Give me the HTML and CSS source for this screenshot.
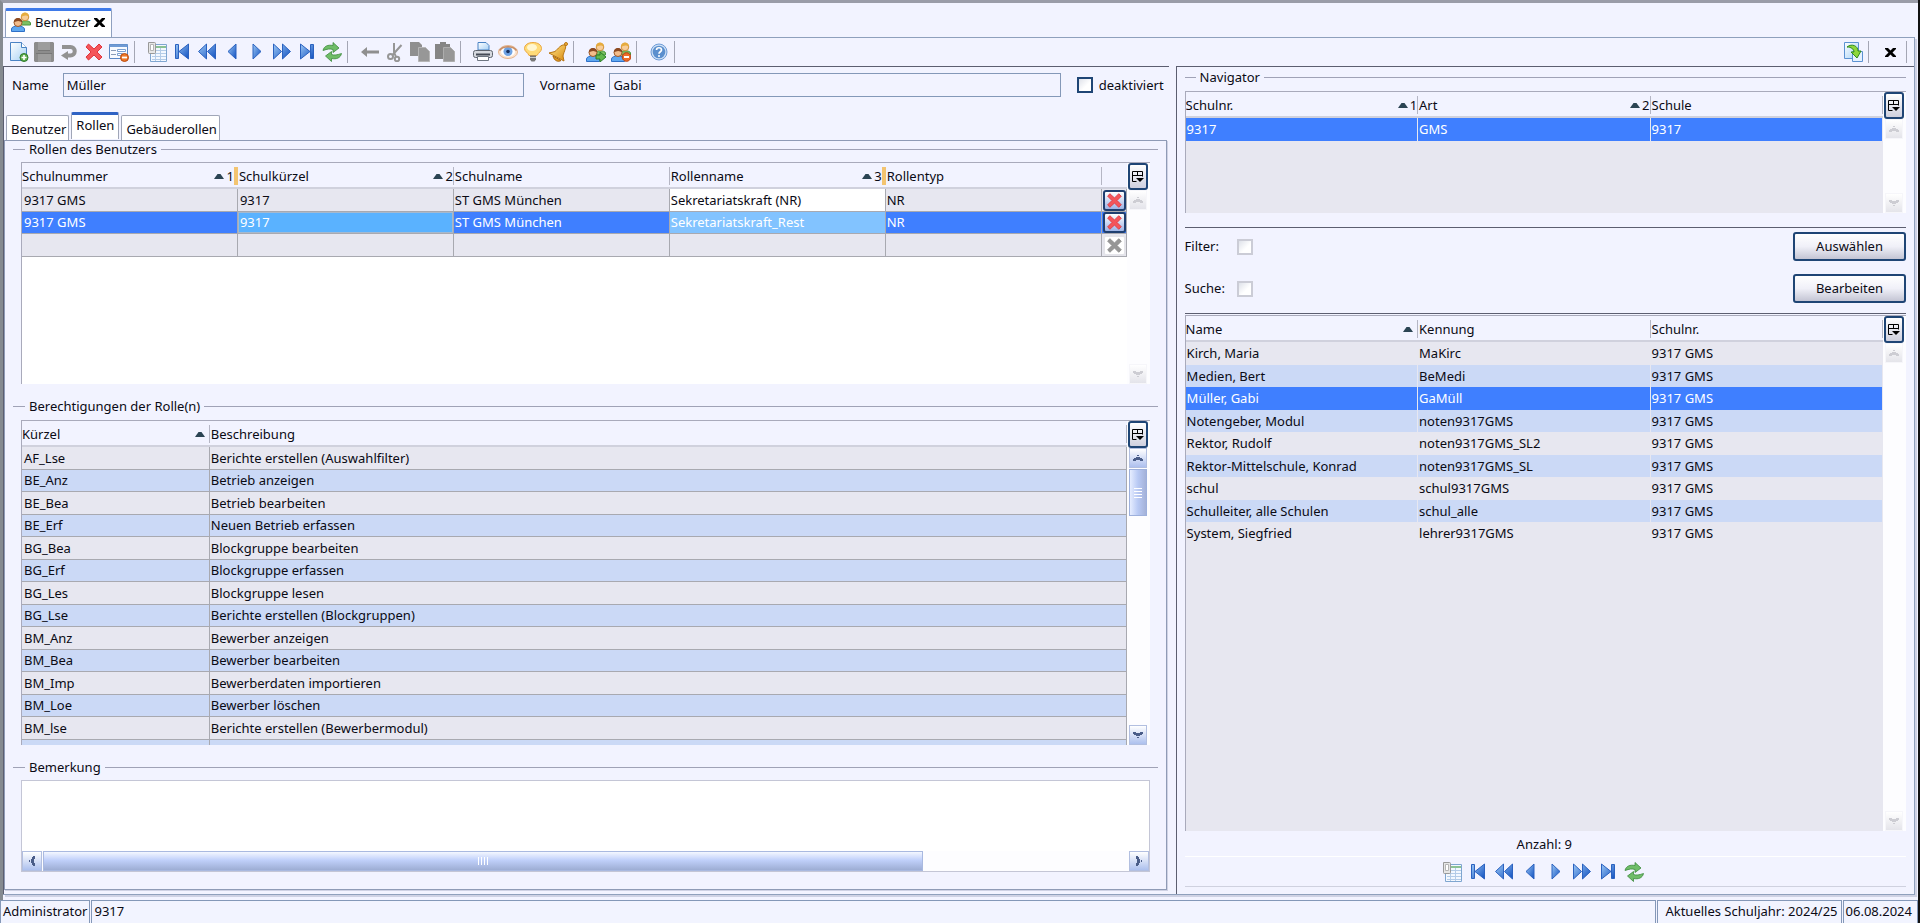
FILE: index.html
```html
<!DOCTYPE html>
<html lang="de">
<head>
  <meta charset="UTF-8">
  <meta name="viewport" content="width=device-width, initial-scale=1.0">
  <title>Benutzer</title>
  <link rel="stylesheet" href="styles.css">
</head>
<body>
  <!-- Icon sprite -->
  <svg class="sprite" aria-hidden="true">
    <defs>
      <linearGradient id="blue" x1="0" y1="0" x2="1" y2="1">
        <stop offset="0" stop-color="#9cc8f5"/>
        <stop offset="1" stop-color="#0f4fc0"/>
      </linearGradient>
      <linearGradient id="sky" x1="0" y1="0" x2="1" y2="1">
        <stop offset="0" stop-color="#ffffff"/>
        <stop offset="1" stop-color="#a5d0f5"/>
      </linearGradient>
      <linearGradient id="gold" x1="0" y1="0" x2="1" y2="1">
        <stop offset="0" stop-color="#ffe58a"/>
        <stop offset="1" stop-color="#d98a10"/>
      </linearGradient>
    </defs>
    <symbol id="i-new" viewBox="0 0 20 20">
      <path d="M1.500 .5h11l5 5v13h-16z" fill="url(#sky)" stroke="#4a83c4"/>
      <path d="M12.500 .5v5h5" fill="#fff" stroke="#4a83c4"/>
      <circle cx="15" cy="15.500" r="4" fill="#5fae4e" stroke="#2f7a2c"/>
      <path d="M15 13v5M12.500 15.500h5" stroke="#fff" stroke-width="1.600"/>
    </symbol>
    <symbol id="i-save" viewBox="0 0 20 20">
      <path d="M1 0h18l1 1v18l-1 1H1l-1-1V1z" fill="#8c8c8c"/>
      <path d="M4 0h12v8H4zM4 12h13v8H4z" fill="#9d9d9d"/>
      <path d="M4 8.500h12M2 11.500h16" stroke="#777"/>
    </symbol>
    <symbol id="i-undo" viewBox="0 0 20 20">
      <path d="M3 5h8.500a4.200 4.200 0 0 1 0 8.500H8" fill="none" stroke="#929292" stroke-width="4"/>
      <path d="M9 9v9L2 13.500z" fill="#929292"/>
    </symbol>
    <symbol id="i-delete" viewBox="0 0 20 20">
      <path d="M4.500 2 10 7l5-5 3 3-5 5 5 5-3 3-5-5-5.500 5-2.500-3 5-5-5-5z" fill="#f4555a" stroke="#e0353c" stroke-linejoin="round"/>
    </symbol>
    <symbol id="i-delete-off" viewBox="0 0 20 20">
      <path d="M4.500 2 10 7l5-5 3 3-5 5 5 5-3 3-5-5-5.500 5-2.500-3 5-5-5-5z" fill="#969696" stroke="#8a8a8a" stroke-linejoin="round"/>
    </symbol>
    <symbol id="i-form" viewBox="0 0 20 20">
      <path d="M.5 2.500h18v14H.5z" fill="#f7faff" stroke="#5a87c4"/>
      <path d="M.5 2.500h18v2.500H.5z" fill="#6f9ad4"/>
      <path d="M2 8.500h5M2 12.500h5" stroke="#8a9cb8"/>
      <path d="M8.500 7.500h8v2h-8zM8.500 11.500h5v2h-5z" fill="#fff" stroke="#7a9fd0"/>
      <circle cx="15.500" cy="15.500" r="4" fill="#ee7726" stroke="#b84a10"/>
      <path d="M13 15.500h5" stroke="#fff" stroke-width="1.800"/>
    </symbol>
    <symbol id="i-table" viewBox="0 0 20 20">
      <path d="M3.500 2.500h16v17h-16z" fill="#f3f8ff" stroke="#7fa6d0"/>
      <path d="M8 5h11" stroke="#68b070" stroke-width="1.500"/>
      <path d="M5 8.500h14M5 11.500h14M5 14.500h14M5 17.500h14M13.500 6v13M8.500 6v13" stroke="#b4cce8"/>
      <path d="M1.500 .5h6a1 1 0 0 1 1 1v9a1 1 0 0 1-1 1h-5a1 1 0 0 1-1-1z" fill="#e6e6e6" stroke="#999"/>
      <path d="M3.500 2.500h3v6h-3z" fill="#fff" stroke="#b5b5b5"/>
    </symbol>
    <symbol id="i-prev" viewBox="0 0 20 20"><path d="M14 2v15L6 9.500z" fill="url(#blue)" stroke="#2b62c0"/></symbol>
    <symbol id="i-next" viewBox="0 0 20 20"><path d="M6 2v15l8-7.500z" fill="url(#blue)" stroke="#2b62c0"/></symbol>
    <symbol id="i-first" viewBox="0 0 20 20"><path d="M3.500 2.500h3v14h-3zM16.500 2v15L7 9.500z" fill="url(#blue)" stroke="#2b62c0"/></symbol>
    <symbol id="i-last" viewBox="0 0 20 20"><path d="M13.500 2.500h3v14h-3zM3.500 2v15L13 9.500z" fill="url(#blue)" stroke="#2b62c0"/></symbol>
    <symbol id="i-rew" viewBox="0 0 20 20"><path d="M9.500 2v15l-8-7.500zM18.500 2v15l-8-7.500z" fill="url(#blue)" stroke="#2b62c0"/></symbol>
    <symbol id="i-ff" viewBox="0 0 20 20"><path d="M1.500 2v15l8-7.500zM10.500 2v15l8-7.500z" fill="url(#blue)" stroke="#2b62c0"/></symbol>
    <symbol id="i-refresh" viewBox="0 0 20 20">
      <path d="M1 8.500C2 4 6 2.500 11 3.500V.5l6 5.500-6 4.500V7.500C8 6.500 5.500 7 1 8.500z" fill="#6fbd68" stroke="#3c8a3c" stroke-width=".8"/>
      <path d="M19.500 11.500c-1 4.500-5 6-10 5v3L3.500 14l6-4.500v3c3 1 5.500.5 10-1z" fill="#6fbd68" stroke="#3c8a3c" stroke-width=".8"/>
    </symbol>
    <symbol id="i-back" viewBox="0 0 20 20"><path d="M7 5v3.500h12v3H7V15l-6-5z" fill="#8f8f8f"/></symbol>
    <symbol id="i-cut" viewBox="0 0 20 20">
      <path d="M9 1v9l2 5M16.500 3 7.500 13" fill="none" stroke="#969696" stroke-width="2"/>
      <circle cx="5.500" cy="14.500" r="2.500" fill="none" stroke="#969696" stroke-width="2"/>
      <circle cx="12" cy="17" r="2.200" fill="none" stroke="#969696" stroke-width="2"/>
    </symbol>
    <symbol id="i-copy" viewBox="0 0 20 20">
      <path d="M0 0h9l3 3v11H0z" fill="#8f8f8f"/>
      <path d="M8.500 5.500h7l4 4v10h-11z" fill="#979797" stroke="#b5b5b5"/>
    </symbol>
    <symbol id="i-paste" viewBox="0 0 20 20">
      <path d="M0 2h5V0h6v2h4v15H0z" fill="#858585"/>
      <path d="M8.500 5.500h7l4 4v10h-11z" fill="#979797" stroke="#adadad"/>
    </symbol>
    <symbol id="i-print" viewBox="0 0 20 20">
      <path d="M5 8V.5h8l3 3V8z" fill="url(#sky)" stroke="#4a83c4"/>
      <rect x=".5" y="8.500" width="19" height="7" rx="2" fill="#d5d8de" stroke="#5e646e"/>
      <path d="M3 12.500h14" stroke="#444a55" stroke-width="2"/>
      <path d="M4.500 14.500h11v4h-11z" fill="#fff" stroke="#6e7682"/>
    </symbol>
    <symbol id="i-eye" viewBox="0 0 20 20">
      <ellipse cx="10" cy="10" rx="9.500" ry="6.500" fill="#fbe3cd" stroke="#e5b48c"/>
      <ellipse cx="10" cy="10" rx="7" ry="4.500" fill="#fff"/>
      <circle cx="10" cy="9.500" r="4.500" fill="#6fa3e3"/>
      <circle cx="10" cy="9.500" r="1.800" fill="#17315f"/>
      <path d="M1.500 8.500C5 3.500 15 3.500 18.500 8.500" fill="none" stroke="#c78e68" stroke-width="1.500"/>
    </symbol>
    <symbol id="i-bulb" viewBox="0 0 20 20">
      <path d="M10 .5c5 0 8.500 2.500 8.500 6 0 3-3 4-4.500 7H6C5 10.500 1.500 9.500 1.500 6.500c0-3.500 3.500-6 8.500-6z" fill="#ffdb78" stroke="#eba63e"/>
      <ellipse cx="9" cy="5.500" rx="5" ry="3.500" fill="#fff6d0"/>
      <path d="M7 13.500h6v4l-1.500 2h-3L7 17.500z" fill="#777"/>
      <path d="M7 15.500h6" stroke="#ccc"/>
    </symbol>
    <symbol id="i-bell" viewBox="0 0 20 20">
      <path d="M17 3c2 2-1 6-2 11l1 5L1 11l6-1.500C10 7 13 2 17 3z" fill="url(#gold)" stroke="#b87412"/>
      <circle cx="18" cy="2" r="1.500" fill="#f0b23c" stroke="#b87412"/>
      <path d="m5 14 8 4.500c-3 2-7 0-8-4.500z" fill="#e19a22" stroke="#a8660c"/>
    </symbol>
    <symbol id="i-users" viewBox="0 0 20 20">
      <path d="M9.500 13v-2c0-3 9.500-3 10 0v2z" fill="#7cc063" stroke="#4a9440"/>
      <circle cx="14" cy="5" r="3.800" fill="#f8cd98" stroke="#d09038"/>
      <path d="M10 5c0-6 8-6 8 0-2-2-5-2-8 0z" fill="#e6ac3e"/>
      <path d="M.5 19.500V17c0-4 12.500-4 13 0v2.500z" fill="#5fa8f0" stroke="#2f70c8"/>
      <circle cx="7" cy="10.500" r="4" fill="#f3bd8c" stroke="#a05a28"/>
      <path d="M2.800 10.500c0-6 8.400-6 8.400 0-2.500-2-5.500-2-8.400 0z" fill="#8c4a22"/>
    </symbol>
    <symbol id="i-users-go" viewBox="0 0 20 20">
      <use href="#i-users"/>
      <path d="M10 13h4v-3l6 5-6 5v-3h-4z" fill="#63b84e" stroke="#2c7f2a"/>
    </symbol>
    <symbol id="i-users-off" viewBox="0 0 20 20">
      <use href="#i-users"/>
      <circle cx="15.500" cy="15" r="4.300" fill="#ee6c26" stroke="#b84010"/>
      <path d="M13 15h5" stroke="#fff" stroke-width="2"/>
    </symbol>
    <symbol id="i-help" viewBox="0 0 20 20">
      <circle cx="10" cy="10" r="8" fill="#cfe0f5" stroke="#6d9cd8"/>
      <circle cx="10" cy="10" r="6.300" fill="#5b8fce"/>
      <path d="M7.500 8c0-3 5-3 5 0 0 1.800-2.500 1.800-2.500 3.800" fill="none" stroke="#fff" stroke-width="1.700"/>
      <circle cx="10" cy="14" r="1" fill="#fff"/>
    </symbol>
    <symbol id="i-swap" viewBox="0 0 20 20">
      <path d="M1.500 .5h14v16h-14z" fill="url(#sky)" stroke="#5c92d2"/>
      <path d="M9.500 9.500h10v10h-10z" fill="#e5f2ff" stroke="#5c92d2"/>
      <path d="M4 5c5-4 11-1 11 4h3l-4 7-6-6h3c0-3-3-5-7-5z" fill="#8ed63c" stroke="#2f8a1c"/>
    </symbol>
    <symbol id="i-close" viewBox="0 0 11 11"><path d="M0 1h3l2.500 2.500L8 1h3v1L7.500 5.500 11 9v1H8L5.500 7.500 3 10H0V9l3.500-3.500L0 2z" fill="#000"/></symbol>
    <symbol id="i-columns" viewBox="0 0 14 14">
      <path d="M1.500 11.500v-10h10v5M1.500 5.500h10M6.500 1.500v4M1.500 11.500h4" fill="none" stroke="#000"/>
      <path d="M5 8h8l-4 4z" fill="#000"/>
    </symbol>
    <symbol id="i-sort" viewBox="0 0 10 6"><path d="M0 6 3.500 1h3L10 6z" fill="#2b4453"/></symbol>
    <symbol id="i-chev" viewBox="0 0 12 8">
      <path d="M1 6h2V5h2V4h2v1h2v1h2" fill="none" stroke="currentColor" stroke-width="2"/>
      <path d="M5 1.500h2" stroke="currentColor"/>
    </symbol>
  </svg>

  <div class="window">
    <div class="window-tabs">
      <div class="window-tab">
        <svg class="icon"><use href="#i-users"/></svg>
        <span>Benutzer</span>
        <button class="tab-close" aria-label="Tab schließen"><svg><use href="#i-close"/></svg></button>
      </div>
    </div>

    <div class="workspace">
      <div class="toolbar">
        <button aria-label="Neu"><svg class="icon"><use href="#i-new"/></svg></button>
        <button aria-label="Speichern"><svg class="icon"><use href="#i-save"/></svg></button>
        <button aria-label="Rückgängig"><svg class="icon"><use href="#i-undo"/></svg></button>
        <button aria-label="Löschen"><svg class="icon"><use href="#i-delete"/></svg></button>
        <button aria-label="Maske leeren"><svg class="icon"><use href="#i-form"/></svg></button>
        <span class="sep"></span>
        <button aria-label="Liste"><svg class="icon"><use href="#i-table"/></svg></button>
        <button aria-label="Erster"><svg class="icon"><use href="#i-first"/></svg></button>
        <button aria-label="Schnell zurück"><svg class="icon"><use href="#i-rew"/></svg></button>
        <button aria-label="Zurück"><svg class="icon"><use href="#i-prev"/></svg></button>
        <button aria-label="Weiter"><svg class="icon"><use href="#i-next"/></svg></button>
        <button aria-label="Schnell weiter"><svg class="icon"><use href="#i-ff"/></svg></button>
        <button aria-label="Letzter"><svg class="icon"><use href="#i-last"/></svg></button>
        <button aria-label="Aktualisieren"><svg class="icon"><use href="#i-refresh"/></svg></button>
        <span class="sep"></span>
        <button aria-label="Vorherige Maske"><svg class="icon"><use href="#i-back"/></svg></button>
        <button aria-label="Ausschneiden"><svg class="icon"><use href="#i-cut"/></svg></button>
        <button aria-label="Kopieren"><svg class="icon"><use href="#i-copy"/></svg></button>
        <button aria-label="Einfügen"><svg class="icon"><use href="#i-paste"/></svg></button>
        <span class="sep"></span>
        <button aria-label="Drucken"><svg class="icon"><use href="#i-print"/></svg></button>
        <button aria-label="Vorschau"><svg class="icon"><use href="#i-eye"/></svg></button>
        <button aria-label="Tipp"><svg class="icon"><use href="#i-bulb"/></svg></button>
        <button aria-label="Erinnerung"><svg class="icon"><use href="#i-bell"/></svg></button>
        <span class="sep"></span>
        <button aria-label="Benutzer aktivieren"><svg class="icon"><use href="#i-users-go"/></svg></button>
        <button aria-label="Benutzer sperren"><svg class="icon"><use href="#i-users-off"/></svg></button>
        <span class="sep"></span>
        <button aria-label="Hilfe"><svg class="icon"><use href="#i-help"/></svg></button>
        <span class="sep"></span>
        <div class="toolbar-right">
          <button aria-label="Wechseln"><svg class="icon"><use href="#i-swap"/></svg></button>
          <span class="sep"></span>
          <button class="close" aria-label="Schließen"><svg><use href="#i-close"/></svg></button>
          <span class="sep"></span>
        </div>
      </div>

      <div class="panes">
        <!-- User details -->
        <main class="pane-left">
          <div class="name-row">
            <label for="name">Name</label>
            <input type="text" id="name" class="field-name" value="Müller">
            <label for="vorname">Vorname</label>
            <input type="text" id="vorname" class="field-vorname" value="Gabi">
            <input type="checkbox" id="deaktiviert">
            <label for="deaktiviert">deaktiviert</label>
          </div>

          <div class="tabs">
            <button class="tab">Benutzer</button>
            <button class="tab active">Rollen</button>
            <button class="tab">Gebäuderollen</button>
          </div>

          <div class="tab-panel">
            <fieldset>
              <legend>Rollen des Benutzers</legend>
              <div class="grid-box roles">
                <div class="grid-view white">
                  <table class="lined">
                    <colgroup><col><col><col><col><col><col class="col-action"></colgroup>
                    <thead>
                      <tr>
                        <th class="mark"><div><span>Schulnummer</span><svg class="sort"><use href="#i-sort"/></svg><b>1</b></div></th>
                        <th><div><span>Schulkürzel</span><svg class="sort"><use href="#i-sort"/></svg><b>2</b></div></th>
                        <th><div><span>Schulname</span></div></th>
                        <th class="mark"><div><span>Rollenname</span><svg class="sort"><use href="#i-sort"/></svg><b>3</b></div></th>
                        <th><div><span>Rollentyp</span></div></th>
                        <th></th>
                      </tr>
                    </thead>
                    <tbody>
                      <tr>
                        <td>9317 GMS</td><td>9317</td><td>ST GMS München</td><td class="editable">Sekretariatskraft (NR)</td><td>NR</td>
                        <td class="action"><button class="remove" aria-label="Rolle entfernen"><svg><use href="#i-delete"/></svg></button></td>
                      </tr>
                      <tr class="selected">
                        <td>9317 GMS</td><td class="focus">9317</td><td>ST GMS München</td><td class="editable">Sekretariatskraft_Rest</td><td>NR</td>
                        <td class="action"><button class="remove" aria-label="Rolle entfernen"><svg><use href="#i-delete"/></svg></button></td>
                      </tr>
                      <tr>
                        <td></td><td></td><td></td><td></td><td></td>
                        <td class="action"><button class="remove off" aria-label="Rolle entfernen" disabled><svg><use href="#i-delete-off"/></svg></button></td>
                      </tr>
                    </tbody>
                  </table>
                </div>
                <div class="rail off">
                  <button class="columns" aria-label="Spalten"><svg><use href="#i-columns"/></svg></button>
                  <span class="arrow"><svg><use href="#i-chev"/></svg></span>
                  <span class="track"></span>
                  <span class="arrow down"><svg><use href="#i-chev"/></svg></span>
                </div>
              </div>
            </fieldset>

            <fieldset class="grow">
              <legend>Berechtigungen der Rolle(n)</legend>
              <div class="grid-box">
                <div class="grid-view">
                  <table class="lined striped">
                    <colgroup><col class="col-code"><col></colgroup>
                    <thead>
                      <tr>
                        <th><div class="sort-only"><span>Kürzel</span><svg class="sort"><use href="#i-sort"/></svg></div></th>
                        <th><div><span>Beschreibung</span></div></th>
                      </tr>
                    </thead>
                    <tbody>
                      <tr><td>AF_Lse</td><td>Berichte erstellen (Auswahlfilter)</td></tr>
                      <tr><td>BE_Anz</td><td>Betrieb anzeigen</td></tr>
                      <tr><td>BE_Bea</td><td>Betrieb bearbeiten</td></tr>
                      <tr><td>BE_Erf</td><td>Neuen Betrieb erfassen</td></tr>
                      <tr><td>BG_Bea</td><td>Blockgruppe bearbeiten</td></tr>
                      <tr><td>BG_Erf</td><td>Blockgruppe erfassen</td></tr>
                      <tr><td>BG_Les</td><td>Blockgruppe lesen</td></tr>
                      <tr><td>BG_Lse</td><td>Berichte erstellen (Blockgruppen)</td></tr>
                      <tr><td>BM_Anz</td><td>Bewerber anzeigen</td></tr>
                      <tr><td>BM_Bea</td><td>Bewerber bearbeiten</td></tr>
                      <tr><td>BM_Imp</td><td>Bewerberdaten importieren</td></tr>
                      <tr><td>BM_Loe</td><td>Bewerber löschen</td></tr>
                      <tr><td>BM_lse</td><td>Berichte erstellen (Bewerbermodul)</td></tr>
                      <tr><td></td><td></td></tr>
                    </tbody>
                  </table>
                </div>
                <div class="rail">
                  <button class="columns" aria-label="Spalten"><svg><use href="#i-columns"/></svg></button>
                  <span class="arrow"><svg><use href="#i-chev"/></svg></span>
                  <span class="track"><span class="thumb"></span></span>
                  <span class="arrow down"><svg><use href="#i-chev"/></svg></span>
                </div>
              </div>
            </fieldset>

            <fieldset>
              <legend>Bemerkung</legend>
              <div class="remark">
                <textarea aria-label="Bemerkung"></textarea>
                <div class="hbar">
                  <span class="arrow left"><svg><use href="#i-chev"/></svg></span>
                  <span class="track"><span class="thumb"></span></span>
                  <span class="arrow right"><svg><use href="#i-chev"/></svg></span>
                </div>
              </div>
            </fieldset>
          </div>
        </main>

        <!-- Navigator -->
        <aside class="pane-right">
          <fieldset>
            <legend>Navigator</legend>
            <div class="grid-box schools">
              <div class="grid-view">
                <table class="plain">
                  <thead>
                    <tr>
                      <th><div><span>Schulnr.</span><svg class="sort"><use href="#i-sort"/></svg><b>1</b></div></th>
                      <th><div><span>Art</span><svg class="sort"><use href="#i-sort"/></svg><b>2</b></div></th>
                      <th><div><span>Schule</span></div></th>
                    </tr>
                  </thead>
                  <tbody>
                    <tr class="selected"><td>9317</td><td>GMS</td><td>9317</td></tr>
                  </tbody>
                </table>
              </div>
              <div class="rail off">
                <button class="columns" aria-label="Spalten"><svg><use href="#i-columns"/></svg></button>
                <span class="arrow"><svg><use href="#i-chev"/></svg></span>
                <span class="track"></span>
                <span class="arrow down"><svg><use href="#i-chev"/></svg></span>
              </div>
            </div>
          </fieldset>

          <div class="search">
            <div class="search-row">
              <label for="filter">Filter:</label>
              <input type="checkbox" class="dim" id="filter">
              <button class="btn">Auswählen</button>
            </div>
            <div class="search-row">
              <label for="suche">Suche:</label>
              <input type="checkbox" class="dim" id="suche">
              <button class="btn">Bearbeiten</button>
            </div>
          </div>

          <div class="grid-box users">
            <div class="grid-view">
              <table class="plain striped">
                <thead>
                  <tr>
                    <th><div class="sort-only"><span>Name</span><svg class="sort"><use href="#i-sort"/></svg></div></th>
                    <th><div><span>Kennung</span></div></th>
                    <th><div><span>Schulnr.</span></div></th>
                  </tr>
                </thead>
                <tbody>
                  <tr><td>Kirch, Maria</td><td>MaKirc</td><td>9317 GMS</td></tr>
                  <tr><td>Medien, Bert</td><td>BeMedi</td><td>9317 GMS</td></tr>
                  <tr class="selected"><td>Müller, Gabi</td><td>GaMüll</td><td>9317 GMS</td></tr>
                  <tr><td>Notengeber, Modul</td><td>noten9317GMS</td><td>9317 GMS</td></tr>
                  <tr><td>Rektor, Rudolf</td><td>noten9317GMS_SL2</td><td>9317 GMS</td></tr>
                  <tr><td>Rektor-Mittelschule, Konrad</td><td>noten9317GMS_SL</td><td>9317 GMS</td></tr>
                  <tr><td>schul</td><td>schul9317GMS</td><td>9317 GMS</td></tr>
                  <tr><td>Schulleiter, alle Schulen</td><td>schul_alle</td><td>9317 GMS</td></tr>
                  <tr><td>System, Siegfried</td><td>lehrer9317GMS</td><td>9317 GMS</td></tr>
                </tbody>
              </table>
            </div>
            <div class="rail off">
              <button class="columns" aria-label="Spalten"><svg><use href="#i-columns"/></svg></button>
              <span class="arrow"><svg><use href="#i-chev"/></svg></span>
              <span class="track"></span>
              <span class="arrow down"><svg><use href="#i-chev"/></svg></span>
            </div>
          </div>

          <div class="count">Anzahl: 9</div>
          <div class="nav-bar">
            <button aria-label="Liste"><svg class="icon"><use href="#i-table"/></svg></button>
            <button aria-label="Erster"><svg class="icon"><use href="#i-first"/></svg></button>
            <button aria-label="Schnell zurück"><svg class="icon"><use href="#i-rew"/></svg></button>
            <button aria-label="Zurück"><svg class="icon"><use href="#i-prev"/></svg></button>
            <button aria-label="Weiter"><svg class="icon"><use href="#i-next"/></svg></button>
            <button aria-label="Schnell weiter"><svg class="icon"><use href="#i-ff"/></svg></button>
            <button aria-label="Letzter"><svg class="icon"><use href="#i-last"/></svg></button>
            <button aria-label="Aktualisieren"><svg class="icon"><use href="#i-refresh"/></svg></button>
          </div>
        </aside>
      </div>
    </div>
  </div>

  <footer class="statusbar">
    <span>Administrator</span>
    <span class="fill">9317</span>
    <span class="year">Aktuelles Schuljahr: 2024/25</span>
    <span class="date">06.08.2024</span>
  </footer>
</body>
</html>
```
FILE: styles.css
```css
* {
  box-sizing: border-box;
}

body {
  margin: 0;
  height: 100vh;
  min-height: 760px;
  display: flex;
  flex-direction: column;
  background: #f2f3ff;
  border-right: 2px solid #111;
  color: #0a0a14;
  font-family: "Noto Sans", "Open Sans", sans-serif;
  font-size: 13px;
  line-height: 17px;
  overflow: hidden;
}

button,
input,
textarea {
  font: inherit;
  color: inherit;
}

button {
  padding: 0;
  border: 0;
  background: none;
}

.sprite {
  position: absolute;
  width: 0;
  height: 0;
}

.icon {
  display: block;
  width: 20px;
  height: 20px;
}

/* Window frame */
.window {
  flex: 1;
  min-height: 0;
  display: flex;
  flex-direction: column;
  border-top: 3px solid #9a9ca8;
  border-left: 3px solid #858a90;
  padding: 5px 3px 5px 0;
}

.window-tabs {
  display: flex;
  padding-left: 2px;
}

.window-tab {
  display: flex;
  align-items: center;
  gap: 4px;
  height: 29px;
  padding: 0 6px 4px 5px;
  background: #fff;
  border: 1px solid #8fa0c0;
  border-top: 3px solid #3f7ae8;
  border-bottom: 0;
  border-radius: 2px 2px 0 0;
}

.tab-close,
.tab-close svg,
.close svg {
  display: block;
  width: 11px;
  height: 11px;
}

.workspace {
  flex: 1;
  min-height: 0;
  display: flex;
  flex-direction: column;
  border: 1px solid #8fa0bc;
  border-left: 0;
  box-shadow: 2px 2px 0 #cfd2e4;
}

/* Toolbar */
.toolbar {
  display: flex;
  align-items: center;
  height: 28px;
  padding-left: 3px;
}

.toolbar button {
  display: flex;
  align-items: center;
  justify-content: center;
  width: 25px;
  height: 24px;
}

.sep {
  width: 1px;
  height: 22px;
  margin: 0 9px 0 3px;
  background: #a4a6b4;
}

.toolbar-right {
  display: flex;
  align-items: center;
  margin-left: auto;
}

.toolbar-right .sep:last-child {
  margin-right: 7px;
}

/* Panes */
.panes {
  flex: 1;
  min-height: 0;
  display: grid;
  grid-template-columns: 1165fr 738fr;
  grid-template-rows: minmax(0, 1fr);
  column-gap: 7px;
}

.pane-left {
  display: flex;
  flex-direction: column;
  min-width: 0;
  border-top: 1px solid #5c5e70;
  border-left: 1px solid #5c5e70;
  padding: 6px 2px 4px 0;
}

.name-row {
  display: flex;
  align-items: center;
  padding: 0 3px 0 8px;
}

.name-row input[type="text"] {
  min-width: 0;
  height: 24px;
  margin: 0 16px 0 14px;
  padding: 0 3px;
  background: #f2f3ff;
  border: 1px solid #8498b8;
  outline: 0;
}

.field-name {
  flex: 46;
}

.field-vorname {
  flex: 45;
}

input[type="checkbox"] {
  appearance: none;
  flex: none;
  width: 16px;
  height: 16px;
  margin: 0 6px 0 0;
  border: 2px solid #1f4575;
  background: linear-gradient(135deg, #dfe2ea, #fff 60%);
}

input[type="checkbox"].dim {
  border-color: #cbccd6;
}

/* Tabs */
.tabs {
  display: flex;
  align-items: flex-end;
  gap: 2px;
  height: 28px;
  margin-top: 15px;
  padding-left: 2px;
}

.tab {
  height: 25px;
  padding: 2px 2px 0 4px;
  background: #fff;
  border: 1px solid #a0a6b8;
  border-bottom: 0;
  border-radius: 2px 2px 0 0;
}

.tab.active {
  height: 27px;
  padding: 0 4px 4px;
  margin-bottom: 1px;
  border-top: 3px solid #2f63c4;
}

.tab-panel {
  flex: 1;
  min-height: 0;
  display: flex;
  flex-direction: column;
  gap: 14px;
  padding: 0 8px 17px;
  border: 1px solid #8f9bb6;
  box-shadow: 1px 1px 0 #cfd2e4;
}

fieldset {
  flex: none;
  min-width: 0;
  margin: 0;
  padding: 4px 8px 0;
  border: 0;
  border-top: 1px solid #a0a2b6;
  display: flex;
  flex-direction: column;
}

fieldset.grow {
  flex: 1;
  min-height: 0;
  padding-top: 5px;
}

legend {
  margin-left: 4px;
  padding: 0 4px;
}

/* Tables with their scroll rail */
.grid-box {
  flex: 1;
  min-height: 0;
  display: flex;
  border-top: 1px solid #a9aabb;
  border-left: 1px solid #a9aabb;
}

.roles {
  flex: none;
  height: 222px;
}

.schools {
  flex: none;
  height: 122px;
}

.grid-view {
  flex: 1;
  min-width: 0;
  overflow: hidden;
  background: #e7e7f0;
}

.grid-view.white {
  background: #fff;
}

table {
  width: 100%;
  table-layout: fixed;
  border-collapse: separate;
  border-spacing: 0;
}

.col-action {
  width: 25px;
}

.col-code {
  width: 17%;
}

th {
  height: 26px;
  padding: 4px 0 2px;
  background: #f2f3ff;
  border-bottom: 2px solid #d0d1dd;
  font-weight: normal;
  text-align: left;
}

th div {
  display: flex;
  align-items: center;
  height: 18px;
  border-right: 1px solid #b5b6c4;
}

th + th div {
  padding-left: 1px;
}

th.mark div {
  border-right: 4px solid #f3c470;
}

th span {
  flex: 1;
}

th b {
  font-weight: normal;
}

.sort-only {
  padding-right: 2px;
}

.sort {
  width: 10px;
  height: 6px;
  margin-right: 2px;
}

td {
  height: 22px;
  padding: 0 2px;
  background: #e7e7f0;
  white-space: nowrap;
  overflow: hidden;
}

tr:nth-child(odd) td {
  height: 23px;
}

.lined td {
  border-right: 1px solid #a8a9b0;
  border-bottom: 1px solid #a8a9b0;
}

.lined td:nth-child(2) ~ td,
.lined.striped td + td {
  padding-left: 1px;
}

.plain td {
  padding-left: 1px;
  border-right: 1px solid #e7e7f0;
}

.striped tr:nth-child(even) td {
  background: #cbd9f6;
}

.plain tbody tr.selected td,
.lined tbody tr.selected td {
  background: #3f7fff;
  color: #fff;
}

.lined td.editable {
  background: #fff;
}

.lined tbody tr.selected td.editable {
  background: #82c3ff;
}

.lined tbody tr.selected td.focus {
  background: #5ab2ff;
  box-shadow: inset 0 0 0 1px #a5b9cf;
}

.lined td.action {
  padding: 0;
}

.remove {
  display: flex;
  align-items: center;
  justify-content: center;
  width: 100%;
  height: 21px;
  border: 2px solid #1f3f70;
  border-radius: 3px;
  background: linear-gradient(#fff, #9db4e6);
}

.remove svg {
  width: 17px;
  height: 17px;
}

.remove.off {
  border-color: #e4e4ea;
  background: #fff;
}

.rail {
  display: flex;
  flex-direction: column;
  width: 23px;
  padding: 0 2px 0 1px;
  background: #fdfdff;
}

.columns {
  display: flex;
  align-items: center;
  justify-content: center;
  height: 27px;
  border: 2px solid #1f4575;
  border-radius: 3px;
  background: linear-gradient(#fff, #cfd0de);
}

.columns svg {
  flex: none;
  width: 14px;
  height: 14px;
}

.arrow {
  display: flex;
  align-items: center;
  justify-content: center;
  width: 18px;
  height: 20px;
  margin: 0 auto;
  border: 1px solid #b2bfe0;
  background: linear-gradient(#fff, #adc0ee);
  color: #4a5d88;
}

.arrow svg {
  flex: none;
  width: 12px;
  height: 8px;
}

.off .arrow {
  border-color: #f6f6fa;
  background: linear-gradient(#fff, #e4e4ea);
  color: #cdcdd3;
}

.arrow.down svg {
  transform: rotate(180deg);
}

.arrow.left svg {
  transform: rotate(-90deg);
}

.arrow.right svg {
  transform: rotate(90deg);
}

.track {
  flex: 1;
  display: flex;
}

.rail .thumb {
  width: 18px;
  height: 47px;
  margin: 1px auto 0;
  border: 1px solid #9db0dc;
  background:
    repeating-linear-gradient(#fff 0 1px, transparent 1px 3px) center / 8px 10px no-repeat,
    linear-gradient(90deg, #e6edff, #b8c9f4 50%, #a4b2d8);
}

/* Remark */
.remark {
  display: flex;
  flex-direction: column;
  height: 92px;
  border: 1px solid #c4c6d6;
  background: #fff;
}

.remark textarea {
  flex: 1;
  min-height: 0;
  padding: 2px 3px;
  border: 0;
  outline: 0;
  resize: none;
  overflow: hidden;
}

.hbar {
  display: flex;
  height: 20px;
  background: #fdfdff;
}

.hbar .arrow {
  width: 20px;
}

.hbar .thumb {
  width: 81%;
  margin-left: 1px;
  border: 1px solid #a9b9e0;
  background:
    repeating-linear-gradient(90deg, #fff 0 1px, transparent 1px 3px) center / 10px 8px no-repeat,
    linear-gradient(#f4f7ff, #c0d0fa 45%, #9dadd4);
}

/* Navigator */
.pane-right {
  display: flex;
  flex-direction: column;
  min-width: 0;
  border-top: 1px solid #5c5e70;
  border-left: 1px solid #5c5e70;
  padding: 2px 8px 7px;
}

.pane-right fieldset {
  padding: 5px 0 0;
}

.pane-right legend {
  margin-left: 11px;
}

.search {
  display: flex;
  flex-direction: column;
  gap: 13px;
  margin-top: 14px;
  padding: 4px 0 10px;
  border-top: 1px solid #5c5e70;
  border-bottom: 1px solid #5c5e70;
}

.search-row {
  display: flex;
  align-items: center;
}

.search-row label {
  width: 52px;
}

.btn {
  width: 113px;
  height: 29px;
  margin-left: auto;
  border: 2px solid #1f4575;
  border-radius: 3px;
  background: linear-gradient(#fff, #f0f0f8 50%, #c4c5d4);
}

.users {
  margin-top: 1px;
}

.count {
  padding: 5px 2px 3px 0;
  text-align: center;
}

.nav-bar {
  display: flex;
  justify-content: center;
  padding: 5px 4px 4px 0;
  border-top: 1px solid #fff;
  border-bottom: 1px solid #cfd1df;
}

.nav-bar button {
  width: 26px;
  display: flex;
  justify-content: center;
}

/* Status bar */
.statusbar {
  display: flex;
  gap: 1px;
  height: 23px;
}

.statusbar span {
  padding: 2px 2px 0;
  background: #f2f4ff;
  border: 1px solid #8498b8;
  border-bottom: 0;
}

.statusbar .fill {
  flex: 1;
}

.statusbar .year {
  padding: 2px 3px 0 7px;
}

.statusbar .date {
  padding-right: 5px;
}
```
